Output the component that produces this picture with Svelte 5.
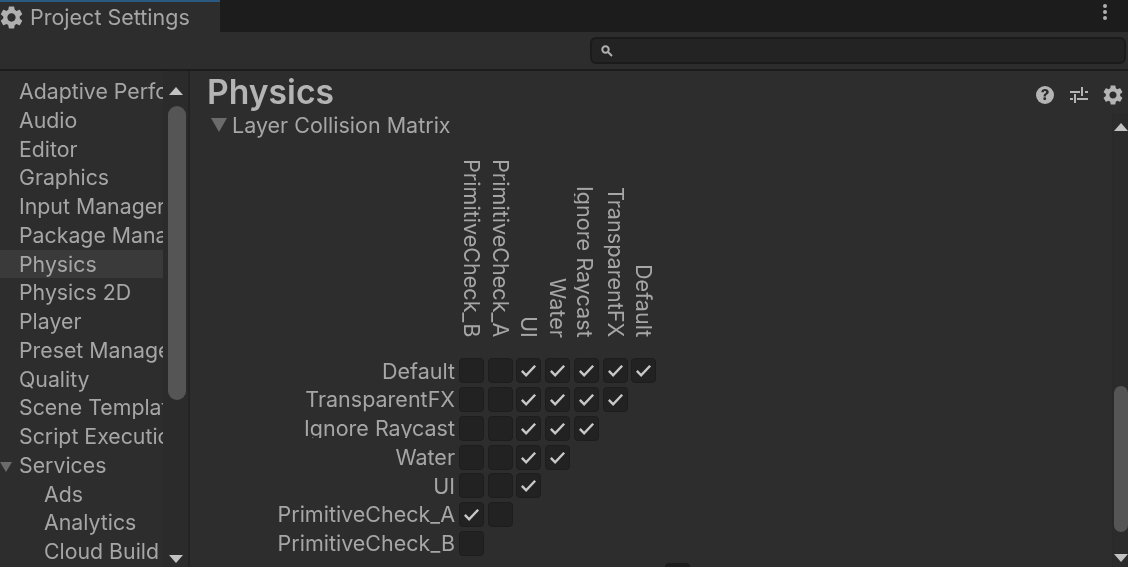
<script lang="ts">
	const sideItems = [
		{ label: 'Adaptive Performance' },
		{ label: 'Audio' },
		{ label: 'Editor' },
		{ label: 'Graphics' },
		{ label: 'Input Manager' },
		{ label: 'Package Manager' },
		{ label: 'Physics', active: true },
		{ label: 'Physics 2D' },
		{ label: 'Player' },
		{ label: 'Preset Manager' },
		{ label: 'Quality' },
		{ label: 'Scene Template' },
		{ label: 'Script Execution Order' },
		{ label: 'Services', open: true },
		{ label: 'Ads', child: true },
		{ label: 'Analytics', child: true },
		{ label: 'Cloud Build', child: true }
	];

	const layers = ['Default', 'TransparentFX', 'Ignore Raycast', 'Water', 'UI', 'PrimitiveCheck_A', 'PrimitiveCheck_B'];
	const columns = [...layers].reverse();

	// row, then which cells are ticked, counted from the left
	const ticked: Record<string, number[]> = {
		Default: [2, 3, 4, 5, 6],
		TransparentFX: [2, 3, 4, 5],
		'Ignore Raycast': [2, 3, 4],
		Water: [2, 3],
		UI: [2],
		PrimitiveCheck_A: [0],
		PrimitiveCheck_B: []
	};

	const gear = 'M19.14,12.94c0.04-0.3,0.06-0.61,0.06-0.94c0-0.32-0.02-0.64-0.07-0.94l2.03-1.58c0.18-0.14,0.23-0.41,0.12-0.61l-1.92-3.32c-0.12-0.22-0.37-0.29-0.59-0.22l-2.39,0.96c-0.5-0.38-1.03-0.7-1.62-0.94L14.4,2.81c-0.04-0.24-0.24-0.41-0.48-0.41h-3.84c-0.24,0-0.43,0.17-0.47,0.41L9.25,5.35C8.66,5.59,8.12,5.92,7.63,6.29L5.24,5.33c-0.22-0.08-0.47,0-0.59,0.22L2.74,8.87C2.62,9.08,2.66,9.34,2.86,9.48l2.03,1.58C4.84,11.36,4.8,11.69,4.8,12s0.02,0.64,0.07,0.94l-2.03,1.58c-0.18,0.14-0.23,0.41-0.12,0.61l1.92,3.32c0.12,0.22,0.37,0.29,0.59,0.22l2.39-0.96c0.5,0.38,1.03,0.7,1.62,0.94l0.36,2.54c0.05,0.24,0.24,0.41,0.48,0.41h3.84c0.24,0,0.44-0.17,0.47-0.41l0.36-2.54c0.59-0.24,1.13-0.56,1.62-0.94l2.39,0.96c0.22,0.08,0.47,0,0.59-0.22l1.92-3.32c0.12-0.22,0.07-0.47-0.12-0.61L19.14,12.94z M12,15.6c-1.98,0-3.6-1.62-3.6-3.6s1.62-3.6,3.6-3.6s3.6,1.62,3.6,3.6S13.98,15.6,12,15.6z';
</script>

<div class="window">
	<div class="tabbar">
		<div class="tab">
			<svg class="tab-gear" viewBox="2 2 20 20"><path fill-rule="evenodd" d={gear} /></svg>
			<span>Project Settings</span>
		</div>
		<div class="menu-dots"><i></i><i></i><i></i></div>
	</div>

	<div class="searchrow">
		<div class="search">
			<svg viewBox="0 0 14 14" fill="none" stroke="currentColor">
				<circle cx="5.5" cy="5.5" r="3.2" stroke-width="2" />
				<line x1="8" y1="8" x2="12" y2="12" stroke-width="2" />
			</svg>
		</div>
	</div>

	<div class="body">
		<div class="side">
			<ul class="list">
				{#each sideItems as item}
					<li class:active={item.active} class:child={item.child}>
						{#if item.open}<span class="side-arrow"></span>{/if}
						<span class="clip">{item.label}</span>
					</li>
				{/each}
			</ul>
			<div class="side-scroll">
				<span class="arrow up"></span>
				<div class="side-thumb"></div>
				<span class="arrow down"></span>
			</div>
		</div>

		<div class="main">
			<header class="head">
				<h1>Physics</h1>
				<div class="tools">
					<svg viewBox="0 0 20 20">
						<circle cx="10" cy="10" r="9" fill="currentColor" />
						<text x="10" y="15" text-anchor="middle" class="q">?</text>
					</svg>
					<svg viewBox="0 0 20 20" fill="none" stroke="currentColor" stroke-width="2">
						<path d="M1 7h10M16 7h3M13 2v9M1 14h3M8 14h11M6 9v9" />
					</svg>
					<svg viewBox="2 2 20 20" fill="currentColor"><path fill-rule="evenodd" d={gear} /></svg>
				</div>
			</header>

			<div class="content">
				<div class="panel">
					<div class="foldout"><span class="fold-arrow"></span>Layer Collision Matrix</div>

					<div class="matrix">
						<div class="corner"></div>
						{#each columns as name}
							<div class="col-label"><span class:cut={name === 'Ignore Raycast'}>{name}</span></div>
						{/each}

						{#each layers as name, r}
							<div class="row-label" class:cut={name === 'Ignore Raycast'}>{name}</div>
							{#each columns as _, c}
								{#if c < 7 - r}
									<div class="cell">
										<div class="box">
											{#if ticked[name].includes(c)}
												<svg viewBox="0 0 20 20" fill="none" stroke="currentColor" stroke-width="2.6">
													<path d="M3 10.5l4.5 4.5L17 5" />
												</svg>
											{/if}
										</div>
									</div>
								{:else}
									<div></div>
								{/if}
							{/each}
						{/each}

						<div class="next-row"><div class="next-box"></div></div>
					</div>
				</div>

				<div class="main-scroll">
					<span class="arrow up"></span>
					<div class="gap"></div>
					<div class="main-thumb"></div>
					<span class="arrow down"></span>
				</div>
			</div>
		</div>
	</div>
</div>

<style>
	:global(body) {
		margin: 0;
		background: #2d2d2d;
	}

	.window {
		display: flex;
		flex-direction: column;
		height: 567px;
		overflow: hidden;
		font-family: Inter, "Liberation Sans", sans-serif;
		font-size: 21.5px;
		color: #a6a6a6;
		background: #2d2d2d;
		filter: blur(0.5px);
	}

	.tabbar {
		flex: none;
		display: flex;
		justify-content: space-between;
		height: 32px;
		background: #1c1c1c;
	}

	.tab {
		display: flex;
		align-items: center;
		gap: 7px;
		box-sizing: border-box;
		width: 220px;
		background: #2d2d2d;
		border-top: 2px solid #2a5a82;
	}

	.tab-gear {
		width: 23px;
		height: 23px;
		fill: #b0b0b0;
	}

	.menu-dots {
		display: flex;
		flex-direction: column;
		gap: 2px;
		padding: 4px 21px 0 0;
	}

	.menu-dots i {
		width: 4px;
		height: 4px;
		border-radius: 50%;
		background: #b0b0b0;
	}

	.searchrow {
		flex: none;
		display: flex;
		justify-content: flex-end;
		box-sizing: border-box;
		height: 39px;
		padding: 5px 2px 0 0;
		border-bottom: 2px solid #1c1c1c;
	}

	.search {
		display: flex;
		align-items: center;
		box-sizing: border-box;
		width: 536px;
		height: 27px;
		padding-left: 8px;
		background: #232323;
		border: 2px solid #1b1b1b;
		border-radius: 6px;
		color: #b0b0b0;
	}

	.search svg {
		width: 14px;
		height: 14px;
	}

	.body {
		flex: 1;
		min-height: 0;
		display: flex;
	}

	.side {
		flex: none;
		display: flex;
		width: 190px;
		box-sizing: border-box;
		border-right: 2px solid #232323;
	}

	.list {
		list-style: none;
		margin: 0;
		padding: 6px 0 0;
		width: 163px;
		flex: none;
		overflow: hidden;
		font-size: 21.3px;
	}

	.list li {
		position: relative;
		height: 28.75px;
		line-height: 28.75px;
		padding-left: 19px;
		white-space: nowrap;
	}

	.list li.child {
		padding-left: 44px;
	}

	.list li.active {
		background: #3a3a3a;
	}

	.clip {
		display: block;
		overflow: hidden;
	}

	.side-arrow {
		position: absolute;
		left: 0;
		top: 11px;
		border-left: 6px solid transparent;
		border-right: 6px solid transparent;
		border-top: 10px solid #6b6b6b;
	}

	.side-scroll {
		flex: 1;
		display: flex;
		flex-direction: column;
		align-items: center;
		padding: 16px 0 4px;
		background: #2b2b2b;
	}

	.side-thumb {
		width: 18px;
		height: 294px;
		margin: 11px 0 0 2px;
		border-radius: 9px;
		background: #555;
	}

	.arrow {
		flex: none;
		width: 0;
		border-left: 7px solid transparent;
		border-right: 7px solid transparent;
	}

	.arrow.up {
		border-bottom: 8px solid #c2c2c2;
	}

	.arrow.down {
		margin-top: auto;
		border-top: 8px solid #c2c2c2;
	}

	.main {
		flex: 1;
		min-width: 0;
		display: flex;
		flex-direction: column;
	}

	.head {
		flex: none;
		display: flex;
		align-items: center;
		justify-content: space-between;
		height: 42px;
		padding: 0 5px 0 17px;
	}

	h1 {
		margin: 0 0 2px;
		font-size: 33.7px;
		font-weight: 600;
		color: #b4b4b4;
	}

	.tools {
		display: flex;
		gap: 14px;
		padding-top: 6px;
		color: #b4b4b4;
	}

	.tools svg {
		width: 20px;
		height: 20px;
	}

	.q {
		font-size: 15px;
		font-weight: 800;
		fill: #2d2d2d;
	}

	.content {
		flex: 1;
		min-height: 0;
		display: flex;
	}

	.panel {
		flex: 1;
		min-width: 0;
		overflow: hidden;
	}

	.foldout {
		display: flex;
		align-items: center;
		gap: 5px;
		height: 24px;
		padding-left: 21px;
	}

	.fold-arrow {
		border-left: 8px solid transparent;
		border-right: 8px solid transparent;
		border-top: 14px solid #6b6b6b;
	}

	.matrix {
		display: grid;
		grid-template-columns: 267px repeat(7, 28.75px);
		grid-template-rows: 219.6px repeat(7, 28.75px) auto;
	}

	.col-label {
		display: flex;
		justify-content: center;
		align-items: flex-end;
	}

	.col-label span {
		writing-mode: vertical-rl;
		white-space: nowrap;
		font-size: 21.6px;
		line-height: 28px;
		padding: 0 0 19px 1px;
	}

	.col-label span.cut {
		width: 24px;
		overflow: hidden;
	}

	.row-label {
		text-align: right;
		line-height: 28.75px;
		padding-right: 2px;
		white-space: nowrap;
	}

	.row-label.cut {
		height: 23.5px;
		overflow: hidden;
	}

	.cell {
		display: flex;
		align-items: center;
		justify-content: center;
	}

	.box {
		display: flex;
		align-items: center;
		justify-content: center;
		box-sizing: border-box;
		width: 25px;
		height: 25px;
		background: #222;
		border: 1px solid #1d1d1d;
		border-radius: 4px;
		color: #c8c8c8;
	}

	.box svg {
		width: 19px;
		height: 19px;
	}

	.next-row {
		grid-column: 1 / -1;
		padding: 5px 0 0 475px;
	}

	.next-box {
		width: 25px;
		height: 25px;
		background: #1d1d1d;
		border-radius: 4px;
	}

	.main-scroll {
		flex: none;
		display: flex;
		flex-direction: column;
		align-items: center;
		box-sizing: border-box;
		width: 16px;
		padding: 10px 0 5px;
		background: #2b2b2b;
		border-left: 1px solid #292929;
	}

	.gap {
		flex: none;
		height: 255px;
	}

	.main-thumb {
		width: 14px;
		height: 146px;
		border-radius: 7px;
		background: #555;
	}
</style>
